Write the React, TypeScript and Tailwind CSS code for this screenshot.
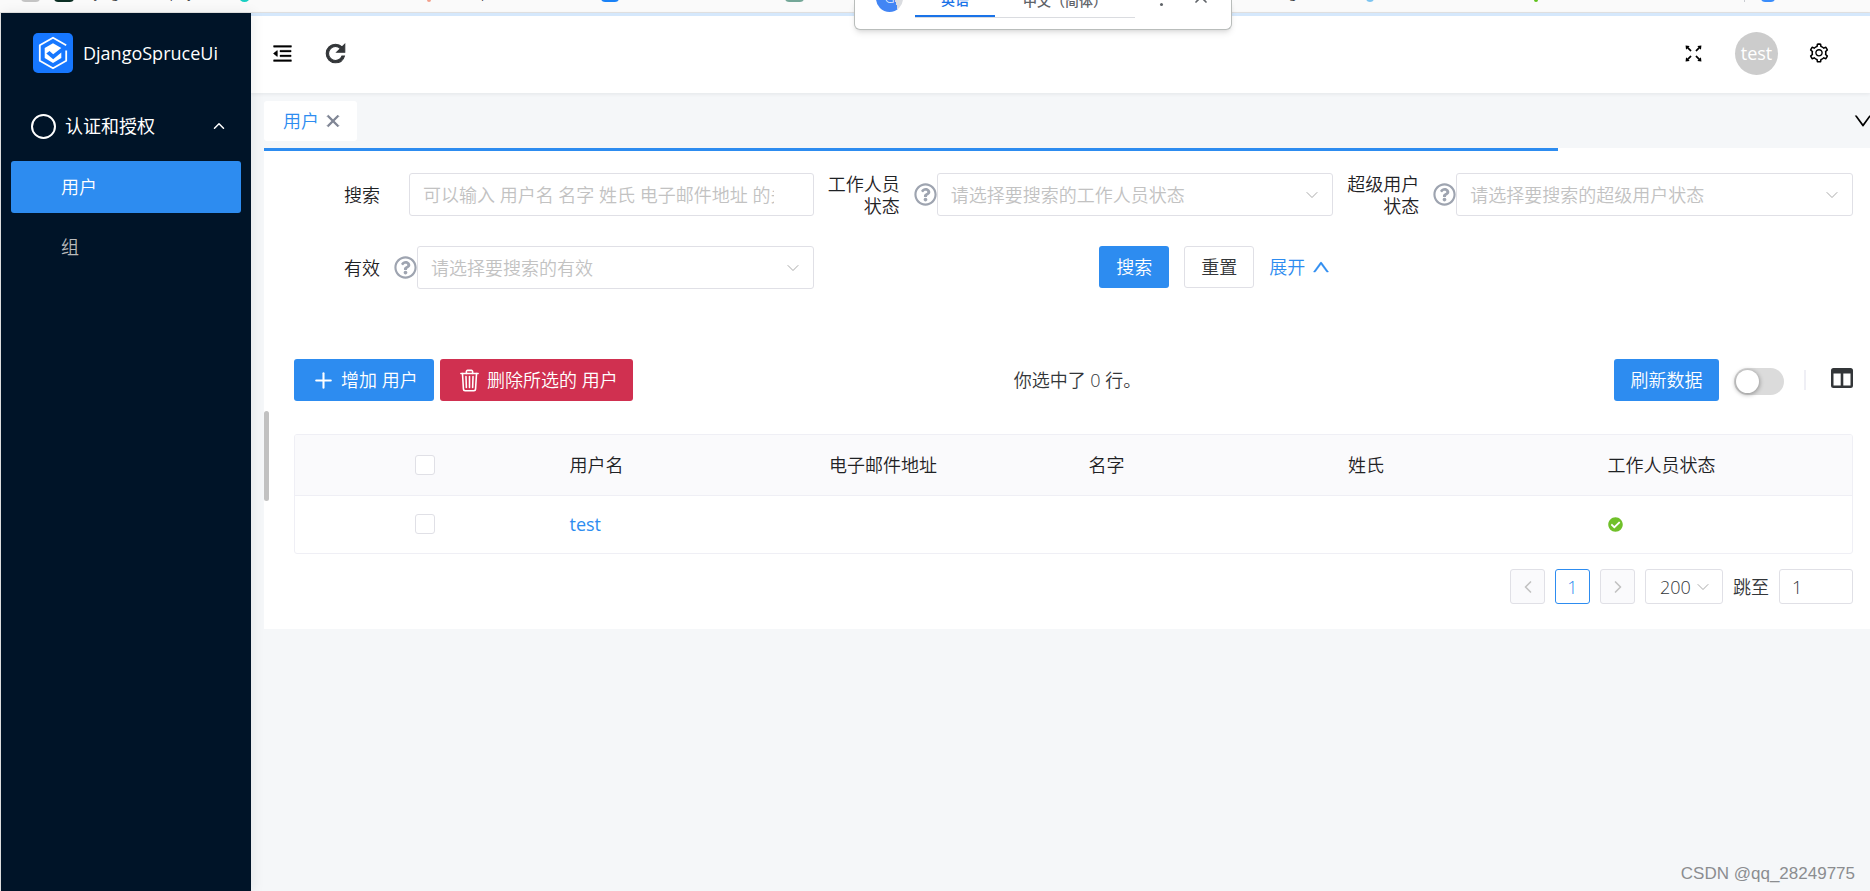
import { useState } from "react";
import type { ReactNode } from "react";
import {
  AiOutlineDown,
  AiOutlineFullscreen,
  AiOutlineMenuFold,
  AiOutlineSetting,
  AiOutlineUp,
} from "react-icons/ai";
import { FaCheckCircle, FaRegQuestionCircle } from "react-icons/fa";
import { IoMdClose, IoMdRefresh } from "react-icons/io";
import { IoTrashOutline } from "react-icons/io5";
import { ChevronDown, ChevronLeft, ChevronRight, ChevronUp, Plus, X } from "lucide-react";

const loadingPercent = 80.6;

const columns = ["用户名", "电子邮件地址", "名字", "姓氏", "工作人员状态"];

type User = {
  username: string;
  email: string;
  firstName: string;
  lastName: string;
  isStaff: boolean;
};

const users: User[] = [
  { username: "test", email: "", firstName: "", lastName: "", isStaff: true },
];

function BookmarkBar() {
  return (
    <div className="flex h-[13px] items-end overflow-hidden border-b border-[#e3e3e3] bg-[#fafafa] pb-[10px] pl-[21px] text-xs font-normal text-[#3c4043]">
      <span className="h-4 w-[19px] shrink-0 rounded-sm bg-[#c4c4c4]" />
      <span className="ml-[14px] h-4 w-5 shrink-0 rounded-sm bg-[#0c2f24]" />
      <span className="ml-3 w-[153px] shrink-0 whitespace-nowrap leading-4">Django 项目 deploy</span>
      <span className="h-4 w-[11px] shrink-0 rounded-full bg-[#19cfc2]" />
      <span className="ml-[177px] h-4 w-1 shrink-0 rounded-full bg-[#f2a08c]" />
      <span className="ml-[50px] w-[120px] shrink-0 whitespace-nowrap leading-4">pandas</span>
      <span className="h-4 w-[18px] shrink-0 rounded-sm bg-[#1a82f7]" />
      <span className="ml-[166px] h-4 w-[19px] shrink-0 rounded-sm bg-[#74a798]" />
      <span className="ml-[468px] w-[94px] shrink-0 whitespace-nowrap leading-4">blog</span>
      <span className="h-4 w-2 shrink-0 rounded-full bg-[#7cc4f0]" />
      <span className="ml-[160px] h-4 w-1 shrink-0 rounded-full bg-[#5fc11c]" />
      <span className="ml-[206px] h-4 w-px shrink-0 bg-[#c9ccd1]" />
      <span className="ml-4 h-4 w-[14px] shrink-0 rounded-sm bg-[#3a8dfb]" />
    </div>
  );
}

function TranslatePopup() {
  return (
    <div className="absolute left-[854px] top-0 z-20 flex h-[30px] w-[378px] items-start overflow-hidden rounded-b-md border border-t-0 border-[#b9bdbb] bg-white shadow-md">
      <span className="-mt-[15px] ml-[21px] flex h-[27px] w-[27px] shrink-0 items-end justify-center rounded-full bg-linear-75 from-[#4285f4] from-65% to-[#dadce0] to-65% pb-[6px] text-sm leading-4 text-white">
        G
      </span>
      <div className="-mt-4 ml-3 flex h-[34px] w-[220px] shrink-0 border-b border-[#dadce0] text-sm font-medium leading-8">
        <button className="w-20 border-b-2 border-[#1a73e8] text-[#1a73e8]">英语</button>
        <button className="w-[140px] text-center text-[#5f6368]">中文（简体）</button>
      </div>
      <span className="ml-[25px] mt-[3px] h-[3px] w-[3px] shrink-0 rounded-full bg-[#5f6368]" />
      <button aria-label="关闭" className="-mt-[13px] ml-[28px] text-[#5f6368]">
        <X size={20} strokeWidth={2} />
      </button>
    </div>
  );
}

function Logo() {
  return (
    <svg viewBox="0 0 40 40" className="h-10 w-10" aria-hidden="true">
      <rect width="40" height="40" rx="5" fill="#1677ff" />
      <path
        d="M33.2 12.200 20 4.800 6.800 12.200v15.600L20 35.200l13.200-7.400V17.500"
        fill="none"
        stroke="#fff"
        strokeWidth="1.800"
      />
      <path
        d="M20 10.200 28.300 14.900 20.200 21.300 16.500 18 13.300 20.600 20.200 26.300 28.300 19.600V24.900L20 30 11.700 25V15Z"
        fill="#fff"
      />
    </svg>
  );
}

function Sidebar() {
  const [open, setOpen] = useState(true);

  return (
    <aside className="z-10 w-[250px] shrink-0 bg-[#001428] text-white shadow-[2px_0_12px_rgba(29,35,41,0.08)]">
      <div className="flex h-20 items-center gap-[10px] pl-8">
        <Logo />
        <span className="font-normal">DjangoSpruceUi</span>
      </div>
      <nav className="px-[10px] pt-[7px]">
        <button
          onClick={() => setOpen(!open)}
          aria-expanded={open}
          className="flex h-[52px] w-full items-center pl-5 pr-[13px] font-normal"
        >
          <span className="h-[25px] w-[25px] rounded-full border-2 border-white" />
          <span className="ml-[9px] flex-1 text-left">认证和授权</span>
          <ChevronUp size={18} strokeWidth={2} />
        </button>
        {open && (
          <div className="flex flex-col gap-2 pt-[9px]">
            <a href="#users" className="flex h-[52px] items-center rounded-[3px] bg-[#2d8cf0] pl-[50px]">
              用户
            </a>
            <a href="#groups" className="flex h-[52px] items-center pl-[50px] text-[#bbbbbb]">
              组
            </a>
          </div>
        )}
      </nav>
    </aside>
  );
}

function Header() {
  return (
    <header className="flex h-20 shrink-0 items-center bg-white pl-5 pr-[40px] text-black shadow-[0_1px_4px_rgba(0,21,41,0.08)]">
      <button aria-label="收起菜单">
        <AiOutlineMenuFold size={23} stroke="currentColor" strokeWidth={16} />
      </button>
      <button aria-label="刷新" className="ml-7 text-[#333639]">
        <IoMdRefresh size={27} stroke="currentColor" strokeWidth={20} />
      </button>
      <div className="ml-auto flex items-center gap-[30px]">
        <button aria-label="全屏">
          <AiOutlineFullscreen size={23} />
        </button>
        <button className="h-[43px] w-[43px] rounded-full bg-[#cccccc] font-normal text-white">test</button>
        <button aria-label="设置">
          <AiOutlineSetting size={22} />
        </button>
      </div>
    </header>
  );
}

function TabBar() {
  return (
    <div className="flex h-[55px] shrink-0 items-center overflow-hidden pl-[13px]">
      <div className="flex h-10 items-center rounded-[3px] bg-white pl-[19px] pr-[14px]">
        <a href="#users" className="text-[#2d8cf0]">
          用户
        </a>
        <button aria-label="关闭标签" className="ml-1 text-[#808695]">
          <IoMdClose size={20} stroke="currentColor" strokeWidth={24} />
        </button>
      </div>
      <button aria-label="更多标签" className="-mr-1 ml-auto shrink-0 text-black">
        <AiOutlineDown size={22} />
      </button>
    </div>
  );
}

type FieldProps = {
  id: string;
  label: string;
  help?: boolean;
  children: ReactNode;
};

function Field({ id, label, help, children }: FieldProps) {
  return (
    <div className="flex h-[43px] items-center">
      <label htmlFor={id} className="ml-[13px] w-[73px] shrink-0 text-right leading-[22px] text-[#1f2225]">
        {label}
      </label>
      {help && (
        <button aria-label={`${label}说明`} className="ml-[14px] shrink-0 text-[#9ea4b0]">
          <FaRegQuestionCircle size={23} />
        </button>
      )}
      <div className={help ? "relative flex-1" : "relative ml-[29px] flex-1"}>{children}</div>
    </div>
  );
}

function FilterSelect({ id, label }: { id: string; label: string }) {
  return (
    <Field id={id} label={label} help>
      <select
        id={id}
        className="h-[43px] w-full appearance-none rounded-[3px] border border-[#e0e0e6] bg-white pl-[13px] pr-10 text-[#c2c2c2]"
      >
        <option>请选择要搜索的{label}</option>
      </select>
      <ChevronDown
        size={20}
        strokeWidth={1}
        className="pointer-events-none absolute right-[11px] top-3 text-[#999999]"
      />
    </Field>
  );
}

function FilterForm() {
  return (
    <form className="grid grid-cols-3 gap-y-[30px]" onSubmit={(e) => e.preventDefault()}>
      <Field id="keyword" label="搜索">
        <input
          id="keyword"
          type="text"
          placeholder="可以输入 用户名 名字 姓氏 电子邮件地址 的关键字"
          className="h-[43px] w-full rounded-[3px] border border-[#e0e0e6] pl-[13px] pr-[39px] placeholder:text-[#c2c2c2]"
        />
      </Field>
      <FilterSelect id="is-staff" label="工作人员状态" />
      <FilterSelect id="is-superuser" label="超级用户状态" />
      <FilterSelect id="is-active" label="有效" />
      <div className="flex h-[42px] items-center justify-end pr-[2px]">
        <button type="submit" className="h-[42px] w-[70px] rounded-[3px] bg-[#2d8cf0] text-white">
          搜索
        </button>
        <button
          type="reset"
          className="ml-[15px] h-[42px] w-[70px] rounded-[3px] border border-[#e0e0e6] text-[#333639]"
        >
          重置
        </button>
        <button type="button" className="ml-[15px] flex items-center gap-[6px] text-[#2d8cf0]">
          展开
          <AiOutlineUp size={20} stroke="currentColor" strokeWidth={24} />
        </button>
      </div>
    </form>
  );
}

function Toolbar() {
  return (
    <div className="mt-[70px] flex h-[42px] items-center">
      <div className="flex flex-1 gap-[6px]">
        <button className="flex h-[42px] w-[140px] items-center rounded-[3px] bg-[#2d8cf0] pl-[17px] text-white">
          <Plus size={25} strokeWidth={2} />
          <span className="ml-[5px]">增加 用户</span>
        </button>
        <button className="flex h-[42px] w-[193px] items-center rounded-[3px] bg-[#d03050] pl-[17px] text-white">
          <IoTrashOutline size={25} />
          <span className="ml-[5px]">删除所选的 用户</span>
        </button>
      </div>
      <p className="pl-2 text-[#333639]">你选中了 0 行。</p>
      <div className="flex flex-1 items-center justify-end">
        <button className="h-[42px] w-[105px] rounded-[3px] bg-[#2d8cf0] text-white">刷新数据</button>
        <input
          type="checkbox"
          role="switch"
          aria-label="斑马纹"
          className="ml-[15px] mt-[3px] h-[27px] w-[50px] appearance-none rounded-full bg-[#dbdbdb] p-[2px] before:block before:h-[23px] before:w-[23px] before:rounded-full before:bg-white before:shadow-[0_1px_4px_1px_rgba(0,0,0,0.3)] checked:bg-[#2d8cf0] checked:before:translate-x-[23px]"
        />
        <span className="ml-5 h-5 w-[2px] bg-[#efeff5]" />
        <button aria-label="列设置" className="mb-1 ml-[25px]">
          <svg viewBox="0 0 22 20" className="h-5 w-[22px]" aria-hidden="true">
            <path
              fill="#333639"
              fillRule="evenodd"
              d="M2.500 0h17A2.500 2.500 0 0 1 22 2.500v15a2.500 2.500 0 0 1-2.500 2.500h-17A2.500 2.500 0 0 1 0 17.500v-15A2.500 2.500 0 0 1 2.500 0ZM2.500 5.500v12h7.200v-12Zm9.800 0v12h7.200v-12Z"
            />
          </svg>
        </button>
      </div>
    </div>
  );
}

function RowCheckbox({ label }: { label: string }) {
  return (
    <input
      type="checkbox"
      aria-label={label}
      className="mx-auto block h-5 w-5 appearance-none rounded-[3px] border border-[#e0e0e6] bg-white checked:bg-[#2d8cf0]"
    />
  );
}

function UserTable() {
  return (
    <div className="mt-[33px] overflow-hidden rounded-[3px] border border-[#efeff5]">
      <table className="w-full table-fixed text-left">
        <thead>
          <tr className="h-[60px] border-b border-[#efeff5] bg-[#fafafc] text-[#1f2225]">
            <th>
              <RowCheckbox label="全选" />
            </th>
            {columns.map((name) => (
              <th key={name} className="pl-[15px] font-[350]">
                {name}
              </th>
            ))}
          </tr>
        </thead>
        <tbody>
          {users.map((user) => (
            <tr key={user.username} className="h-[58px]">
              <td>
                <RowCheckbox label={user.username} />
              </td>
              <td className="pl-[15px]">
                <a href="#user" className="font-normal text-[#2d8cf0]">
                  {user.username}
                </a>
              </td>
              <td className="pl-[15px]">{user.email}</td>
              <td className="pl-[15px]">{user.firstName}</td>
              <td className="pl-[15px]">{user.lastName}</td>
              <td className="pl-[15px]">
                {user.isStaff && <FaCheckCircle size={15} className="text-[#70c02a]" />}
              </td>
            </tr>
          ))}
        </tbody>
      </table>
    </div>
  );
}

function Pagination() {
  return (
    <div className="mt-[15px] flex h-[35px] items-center justify-end gap-[10px] text-[#333639]">
      <button
        disabled
        aria-label="上一页"
        className="flex h-[35px] w-[35px] items-center justify-center rounded-[3px] border border-[#e0e0e6] bg-[#fafafc] text-[#c2c2c2]"
      >
        <ChevronLeft size={20} strokeWidth={2} />
      </button>
      <button className="h-[35px] w-[35px] rounded-[3px] border border-[#2d8cf0] text-[#2d8cf0]">1</button>
      <button
        disabled
        aria-label="下一页"
        className="flex h-[35px] w-[35px] items-center justify-center rounded-[3px] border border-[#e0e0e6] bg-[#fafafc] text-[#c2c2c2]"
      >
        <ChevronRight size={20} strokeWidth={2} />
      </button>
      <div className="relative">
        <select
          aria-label="每页条数"
          className="block h-[35px] w-[78px] appearance-none rounded-[3px] border border-[#e0e0e6] bg-white pl-[14px]"
        >
          <option>200</option>
        </select>
        <ChevronDown
          size={20}
          strokeWidth={1}
          className="pointer-events-none absolute right-[10px] top-2 text-[#999999]"
        />
      </div>
      <label htmlFor="jump">跳至</label>
      <input
        id="jump"
        type="text"
        defaultValue="1"
        className="h-[35px] w-[74px] rounded-[3px] border border-[#e0e0e6] px-3"
      />
    </div>
  );
}

export default function App() {
  return (
    <div className="relative flex min-h-screen flex-col overflow-hidden bg-[#f5f7f9] font-['Open_Sans','Noto_Sans_CJK_SC',sans-serif] text-lg font-[350]">
      <BookmarkBar />
      <TranslatePopup />
      <div className="relative flex flex-1 border-l border-[#e3e3e3]">
        <div className="absolute inset-x-0 top-0 z-10 h-[3px] bg-[#2d8cf0]/20" />
        <Sidebar />
        <div className="flex min-w-0 flex-1 flex-col">
          <Header />
          <TabBar />
          <main className="relative ml-[13px] bg-white">
            <div className="h-[3px] bg-[#2d8cf0]" style={{ width: `${loadingPercent}%` }} />
            <div className="pb-[25px] pl-[30px] pr-[17px] pt-[22px]">
              <FilterForm />
              <Toolbar />
              <UserTable />
              <Pagination />
            </div>
            <div className="absolute left-0 top-[263px] h-[90px] w-[5px] rounded-full bg-[#c1c1c1]" />
          </main>
          <footer className="mt-auto pb-[5px] pr-[15px] text-right font-['Liberation_Sans',sans-serif] text-[17px] leading-6 font-normal text-[#8b8d90]">
            CSDN @qq_28249775
          </footer>
        </div>
      </div>
    </div>
  );
}
